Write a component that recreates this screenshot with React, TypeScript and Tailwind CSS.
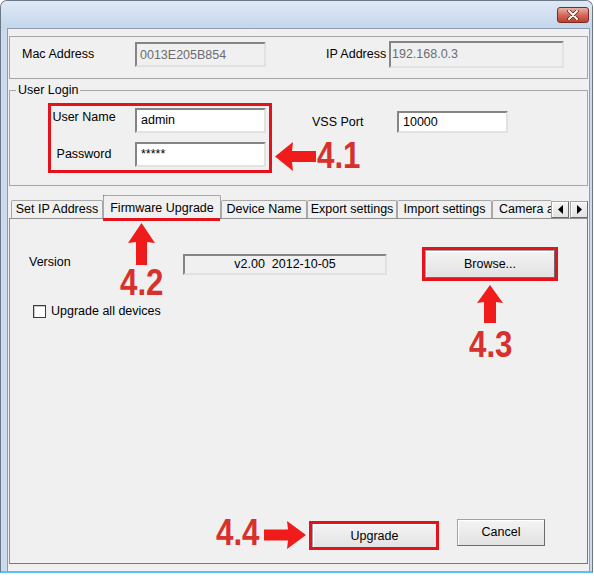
import type { ReactNode } from "react";

const sunken = "border-2 border-[#e2e2e2] border-t-[#858585] border-l-[#858585]";
const btn =
  "flex items-center justify-center border border-[#a3a3a3] border-b-[#6c6c6c] border-r-[#6c6c6c] bg-gradient-to-b from-[#f4f4f4] to-[#e2e2e2] shadow-[inset_1px_1px_0_#ffffff]";
const tab =
  "flex h-[18px] shrink-0 items-center justify-center whitespace-nowrap rounded-t-[2px] border border-b-0 border-[#a8a8a8] bg-[#f0f0f0]";
const big =
  "absolute origin-left scale-x-[0.87] text-[36px] font-bold leading-none text-[#d8302c]";
const redBox = "absolute border-[3px] border-[#e3121b]";

function Input({ className, children }: { className: string; children: ReactNode }) {
  return <div className={`${sunken} ${className}`}>{children}</div>;
}

function CloseButton() {
  return (
    <div className="flex h-[16px] w-[32px] items-center justify-center rounded-[3px] border border-[#7b2b22] bg-gradient-to-b from-[#ebb0a6] via-[#d4695b] to-[#bf3e2e]">
      <svg width="12" height="10" viewBox="0 0 12 10">
        <path d="M2 1 L10 9 M10 1 L2 9" stroke="#5a1a14" strokeWidth="3.4" strokeLinecap="round" />
        <path d="M2 1 L10 9 M10 1 L2 9" stroke="#ffffff" strokeWidth="2" strokeLinecap="round" />
      </svg>
    </div>
  );
}

function Annotations() {
  return (
    <>
      <div className={`${redBox} left-[48px] top-[103px] h-[70px] w-[224px]`} />
      <svg className="absolute left-[275px] top-[142px]" width="41" height="29" viewBox="0 0 41 29">
        <polygon points="0,14.5 18,0 17,9 41,9 41,20 17,20 18,29" fill="#f01c1c" />
      </svg>
      <div className={`${big} left-[317px] top-[138px]`}>4.1</div>

      <div className={`${redBox} left-[103px] top-[195px] h-[26px] w-[117px]`} />
      <svg className="absolute left-[128px] top-[223px]" width="27" height="42" viewBox="0 0 27 42">
        <polygon points="13.5,0 27,20 19,19 19,42 8,42 8,19 0,20" fill="#f01c1c" />
      </svg>
      <div className={`${big} left-[120px] top-[265px]`}>4.2</div>

      <div className={`${redBox} left-[422px] top-[247px] h-[34px] w-[136px]`} />
      <svg className="absolute left-[477px] top-[285px]" width="26" height="38" viewBox="0 0 26 38">
        <polygon points="13,0 26,18 19,17 19,38 7,38 7,17 0,18" fill="#f01c1c" />
      </svg>
      <div className={`${big} left-[469px] top-[327px]`}>4.3</div>

      <div className={`${big} left-[216px] top-[515px]`}>4.4</div>
      <svg className="absolute left-[264px] top-[521px]" width="42" height="28" viewBox="0 0 42 28">
        <polygon points="0,8.5 24,8.5 23,0 42,14 23,28 24,19.5 0,19.5" fill="#f01c1c" />
      </svg>
      <div className={`${redBox} left-[309px] top-[521px] h-[29px] w-[130px]`} />
    </>
  );
}

export default function App() {
  return (
    <div className="relative h-[576px] w-[594px] overflow-hidden bg-white font-['Liberation_Sans',Arial,sans-serif] text-[12.5px] text-black">
      <div className="flex h-[573px] w-[593px] flex-col rounded-t-[7px] border-x border-t border-b-2 border-[#6b7888] border-b-[#55c4f0] bg-[#cbdbed]">
        {/* title bar */}
        <div className="flex h-[27px] shrink-0 justify-end rounded-t-[6px] bg-gradient-to-b from-[#dfe9f5] to-[#c4d6ec] pr-[3px] pt-[6px]">
          <CloseButton />
        </div>

        <div className="ml-[6px] mr-[2px] flex flex-1 flex-col border border-b-0 border-[#8e9cae] bg-[#f0f0f0]">
          {/* mac / ip */}
          <div className="ml-[1px] mt-[7px] flex h-[43px] w-[579px] items-start border border-[#a6a6a6] pt-[4px]">
            <div className="mt-[1px] flex h-[25px] w-[125px] items-center pl-[12px]">Mac Address</div>
            <Input className="mt-[1px] h-[25px] w-[131px] bg-[#f0f0f0] pl-[3px] pt-[2px] text-[#6d6d6d]">
              0013E205B854
            </Input>
            <div className="ml-[60px] flex h-[27px] w-[63px] items-center">IP Address</div>
            <Input className="h-[27px] w-[175px] bg-[#f0f0f0] pl-[1px] pt-[2px] text-[#6d6d6d]">
              192.168.0.3
            </Input>
          </div>

          {/* user login */}
          <fieldset className="ml-[1px] mt-[3px] h-[104px] w-[579px] border border-[#a6a6a6]">
            <legend className="ml-[6px] px-[2px] leading-[16px]">User Login</legend>
            <div className="flex">
              <div className="ml-[35px] flex flex-col">
                <div className="mt-[10px] flex items-center">
                  <div className="-mt-[6px] w-[78px] text-center">User Name</div>
                  <Input className="ml-[12px] flex h-[25px] w-[131px] items-center bg-white pl-[4px]">admin</Input>
                </div>
                <div className="mt-[9px] flex items-center">
                  <div className="w-[78px] text-center">Password</div>
                  <Input className="ml-[12px] flex h-[25px] w-[131px] items-center bg-white pl-[4px]">*****</Input>
                </div>
              </div>
              <div className="ml-[46px] mt-[13px] flex h-[22px] items-center">
                <div className="w-[85px]">VSS Port</div>
                <Input className="flex h-[22px] w-[111px] items-center bg-white pl-[4px]">10000</Input>
              </div>
            </div>
          </fieldset>

          {/* tabs */}
          <div className="mt-[9px] flex h-[23px] items-end">
            <div className="ml-[3px] flex h-full flex-1 items-end overflow-hidden">
              <div className={`${tab} w-[92px]`}>Set IP Address</div>
              <div className="relative z-10 -mb-[1px] flex h-[24px] w-[118px] shrink-0 items-start justify-center whitespace-nowrap rounded-t-[2px] border border-b-0 border-[#a8a8a8] bg-[#f0f0f0] pt-[3px]">
                Firmware Upgrade
              </div>
              <div className={`${tab} w-[86px]`}>Device Name</div>
              <div className={`${tab} w-[90px]`}>Export settings</div>
              <div className={`${tab} w-[95px]`}>Import settings</div>
              <div className={`${tab} w-[120px] justify-start pl-[6px]`}>Camera a</div>
            </div>
            <div className="mr-[1px] flex gap-[1px] self-end">
              <div className={`${btn} h-[17px] w-[18px]`}>
                <svg width="5" height="9" viewBox="0 0 5 9">
                  <polygon points="5,0 0,4.5 5,9" fill="#000" />
                </svg>
              </div>
              <div className={`${btn} h-[17px] w-[18px]`}>
                <svg width="5" height="9" viewBox="0 0 5 9">
                  <polygon points="0,0 5,4.5 0,9" fill="#000" />
                </svg>
              </div>
            </div>
          </div>

          {/* tab panel */}
          <div className="ml-[1px] flex h-[346px] w-[579px] flex-col border border-[#919191] border-b-[#7a7a7a] border-r-[#7a7a7a]">
            <div className="mt-[31px] flex h-[28px] items-center pl-[19px]">
              <div className="-mt-[3px] w-[154px]">Version</div>
              <Input className="flex h-[21px] w-[204px] items-center justify-center whitespace-pre bg-[#f0f0f0]">
                v2.00  2012-10-05
              </Input>
              <div className={`${btn} ml-[38px] h-[28px] w-[130px]`}>Browse...</div>
            </div>
            <div className="mt-[24px] flex items-center pl-[23px]">
              <div className="h-[13px] w-[13px] border border-[#3b3b3b] bg-white shadow-[inset_1px_1px_0_#c8c8c8]" />
              <div className="ml-[5px]">Upgrade all devices</div>
            </div>
            <div className="mt-auto flex items-start justify-end gap-[20px] pb-[14px] pr-[42px]">
              <div className={`${btn} mt-[4px] h-[26px] w-[125px]`}>Upgrade</div>
              <div className={`${btn} h-[27px] w-[88px]`}>Cancel</div>
            </div>
          </div>
        </div>
      </div>
      <Annotations />
    </div>
  );
}
